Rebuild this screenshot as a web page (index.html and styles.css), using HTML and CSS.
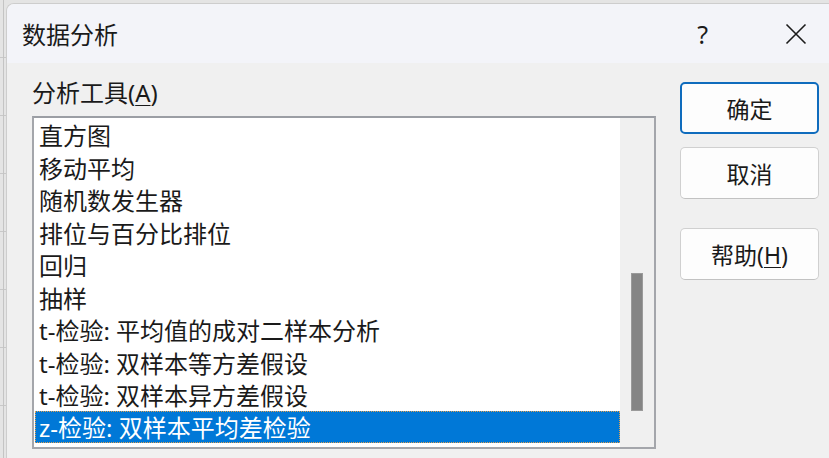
FILE: index.html
```html
<!DOCTYPE html>
<html lang="zh-CN">
<head>
    <meta charset="UTF-8">
    <title>数据分析</title>
    <link rel="stylesheet" href="styles.css">
</head>
<body>

<div class="dialog">
    <!-- Title bar -->
    <div class="titlebar">
        <span class="title">数据分析</span>
        <span class="help-mark">?</span>
        <span class="close-btn">
            <svg width="22" height="22" viewBox="0 0 22 22"><path d="M1.5 1.5 L20.5 20.5 M20.5 1.5 L1.5 20.5" stroke="#1b1b1b" stroke-width="1.6" fill="none"/></svg>
        </span>
    </div>

    <div class="dialog-body">
        <div class="tool-column">
            <div class="field-label">分析工具(<u>A</u>)</div>
            <div class="listbox">
                <ul class="items">
                    <li>直方图</li>
                    <li>移动平均</li>
                    <li>随机数发生器</li>
                    <li>排位与百分比排位</li>
                    <li>回归</li>
                    <li>抽样</li>
                    <li>t-检验: 平均值的成对二样本分析</li>
                    <li>t-检验: 双样本等方差假设</li>
                    <li>t-检验: 双样本异方差假设</li>
                    <li class="selected">z-检验: 双样本平均差检验</li>
                </ul>
                <div class="scrollbar">
                    <div class="thumb"></div>
                </div>
            </div>
        </div>

        <div class="button-column">
            <button class="btn btn-default">确定</button>
            <button class="btn">取消</button>
            <button class="btn btn-help">帮助(<u>H</u>)</button>
        </div>
    </div>
</div>

</body>
</html>
```

FILE: styles.css
```css
body {
    margin: 0;
    padding: 3px 0 0 6px;
    width: 829px;
    height: 458px;
    box-sizing: border-box;
    overflow: hidden;
    background-color: #e4e4e4;
    background-image:
        linear-gradient(to right, transparent 3px, #c4c4c4 3px, #c4c4c4 4px, transparent 4px),
        repeating-linear-gradient(to bottom, transparent 0, transparent 57px, #c8c8c8 57px, #c8c8c8 58px, transparent 58px, transparent 50px);
    font-family: "Noto Sans", "Noto Sans CJK SC", sans-serif;
    color: #1a1a1a;
}
.dialog {
    height: 455px;
    box-sizing: border-box;
    background-color: #f0f0f0;
    border-top: 1px solid #cdcdcd;
    border-left: 1px solid #cdcdcd;
    border-top-left-radius: 8px;
    overflow: hidden;
}
.titlebar {
    height: 59px;
    background-color: #f3f4f9;
    display: flex;
    align-items: center;
    padding-left: 15px;
}
.title {
    font-size: 24px;
    flex-grow: 1;
}
.help-mark {
    font-size: 25px;
    margin-right: 77px;
}
.close-btn {
    display: flex;
    margin-right: 22px;
}
.dialog-body {
    display: flex;
    padding: 14px 0 0 25px;
}
.tool-column {
    width: 624px;
}
.field-label {
    font-size: 24px;
    line-height: 32px;
    margin-bottom: 7px;
}
.field-label u, .btn u {
    text-decoration-thickness: 1px;
    text-underline-offset: 3px;
}
.listbox {
    height: 333px;
    box-sizing: border-box;
    border: 2px solid #a4a6ab;
    border-top-color: #9b9ea4;
    background-color: #ffffff;
    display: flex;
}
.items {
    list-style: none;
    margin: 0;
    padding: 0 0 0 1px;
    flex-grow: 1;
}
.items li {
    height: 32.5px;
    line-height: 35px;
    font-size: 24px;
    padding-left: 4px;
    white-space: nowrap;
    overflow: hidden;
}
.items li.selected {
    line-height: 33px;
    background-color: #0078d7;
    color: #ffffff;
    outline: 1px dotted #e0a050;
    outline-offset: -1px;
}
.scrollbar {
    width: 34px;
    background-color: #f0f0f0;
    display: flex;
    flex-direction: column;
    justify-content: flex-end;
    align-items: center;
    padding-bottom: 36px;
}
.thumb {
    width: 10px;
    height: 136px;
    background-color: #858585;
    border: 1px solid #9a9a9a;
}
.button-column {
    display: flex;
    flex-direction: column;
    margin-left: 24px;
    padding-top: 5px;
}
.btn {
    width: 139px;
    height: 52px;
    margin-bottom: 13px;
    font-family: "Noto Sans", "Noto Sans CJK SC", sans-serif;
    font-size: 23px;
    color: #1a1a1a;
    background-color: #fdfdfd;
    border: 1px solid #d0d0d0;
    border-bottom-color: #c2c2c2;
    border-radius: 5px;
}
.btn-default {
    border: 2px solid #0f6cbd;
}
.btn-help {
    margin-top: 16px;
}
```
